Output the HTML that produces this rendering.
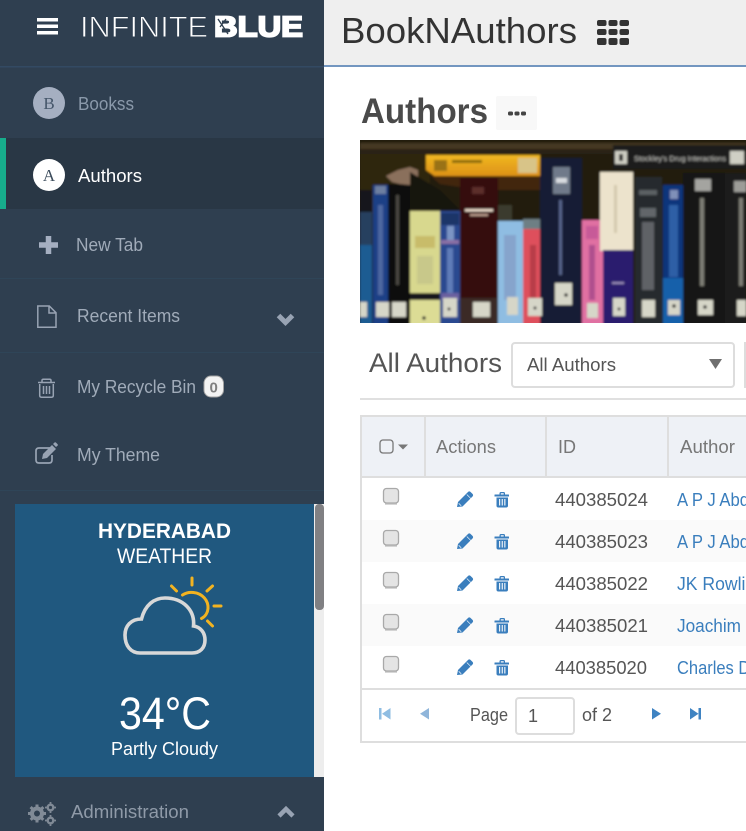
<!DOCTYPE html>
<html lang="en"><head><meta charset="utf-8"><title>BookNAuthors</title>
<style>
html,body{margin:0;padding:0;width:746px;height:831px;overflow:hidden;background:#fff}
svg{display:block}
text{font-family:"Liberation Sans",sans-serif}
</style></head><body>
<svg xmlns="http://www.w3.org/2000/svg" xmlns:xlink="http://www.w3.org/1999/xlink" width="746" height="831" viewBox="0 0 746 831">
<defs>
<filter id="bl" x="-5%" y="-5%" width="110%" height="110%"><feGaussianBlur stdDeviation="1.100"/></filter>
<linearGradient id="yl" x1="0" y1="0" x2="0" y2="1"><stop offset="0" stop-color="#f0b822"/><stop offset="1" stop-color="#d98a14"/></linearGradient>
<clipPath id="img"><rect x="360" y="140" width="386" height="183"/></clipPath>
<g id="pen"><path d="M457 507l1-5 10-10c.8-.8 1.800-.8 2.600 0l1.900 1.900c.8.8.8 1.800 0 2.600l-10 10z" fill="#3a7ebd"/><path d="M466.800 494.500l4.200 4.200" stroke="#fff" stroke-width=".6"/><path d="M458.700 503.300l2.500 2.500" stroke="#cfe0ef" stroke-width="1"/></g>
<g id="tr"><path d="M499.500 494.500v-1.200c0-.8.600-1.300 1.300-1.300h2.900c.8 0 1.300.5 1.300 1.300v1.200h3.500c.3 0 .5.200.5.500v1.500h-14.500V495c0-.3.200-.5.500-.5zm1.300 0h2.900v-1.200h-2.900z" fill="#3a7ebd" fill-rule="evenodd"/><path d="M496.500 497.500h11.500v8.300c0 1-.7 1.700-1.700 1.700h-8.100c-1 0-1.700-.7-1.700-1.700zm2.600 1.500v6.500h1.100V499zm2.600 0v6.500h1.100V499zm2.600 0v6.500h1.100V499z" fill="#3a7ebd" fill-rule="evenodd"/></g>
<g id="cb"><rect x="383.500" y="488.500" width="15" height="14.500" rx="3" fill="#e4e4e4" stroke="#a9a9a9" stroke-width="1.300"/><path d="M385 504h12" stroke="#bbb" stroke-width="1.200"/></g>
</defs>

<!-- main -->
<rect x="324" width="422" height="65" fill="#efefef"/>
<rect x="324" y="65" width="422" height="2" fill="#7396c0"/>
<text x="341" y="43" font-size="36" fill="#333" textLength="236" lengthAdjust="spacingAndGlyphs">BookNAuthors</text>
<g fill="#333">
<rect x="597" y="20" width="9.500" height="6" rx="2"/><rect x="608.500" y="20" width="9" height="6" rx="2"/><rect x="619.500" y="20" width="9.500" height="6" rx="2"/>
<rect x="597" y="29" width="9.500" height="6" rx="2"/><rect x="608.500" y="29" width="9" height="6" rx="2"/><rect x="619.500" y="29" width="9.500" height="6" rx="2"/>
<rect x="597" y="38" width="9.500" height="7" rx="2"/><rect x="608.500" y="38" width="9" height="7" rx="2"/><rect x="619.500" y="38" width="9.500" height="7" rx="2"/>
</g>
<text x="361" y="123" font-size="35" font-weight="700" fill="#4a4a4a" textLength="127" lengthAdjust="spacingAndGlyphs">Authors</text>
<rect x="496" y="96" width="41" height="34" rx="2" fill="#f8f8f8"/>
<g fill="#444"><rect x="508" y="111.500" width="5" height="4" rx="1.500"/><rect x="514.500" y="111.500" width="5" height="4" rx="1.500"/><rect x="521" y="111.500" width="5" height="4" rx="1.500"/></g>

<!-- books -->
<g clip-path="url(#img)"><g filter="url(#bl)">
<rect x="355" y="135" width="395" height="195" fill="#241d0c"/>
<rect x="360" y="143" width="386" height="6" fill="#443820"/>
<rect x="360" y="149" width="386" height="5" fill="#2b2412"/>
<rect x="360" y="154" width="70" height="60" fill="#2e2610"/>
<path d="M426 155H540V177H490L470 180H440L426 170Z" fill="url(#yl)"/>
<path d="M431 176H540V190H480L440 184Z" fill="#43260a"/>
<rect x="518" y="158" width="19" height="15" fill="#d8c488"/>
<rect x="434" y="160" width="13" height="11" fill="#9a7218"/>
<rect x="452" y="160" width="30" height="3" fill="#8a6a10"/>
<rect x="613" y="145" width="133" height="24" fill="#1e1e1d"/>
<rect x="615" y="151" width="12" height="13" fill="#cfcfc4"/>
<rect x="619" y="154" width="4" height="7" fill="#333"/>
<text x="634" y="161" font-size="7" fill="#bdbdb8" textLength="92" lengthAdjust="spacingAndGlyphs">Stockley's Drug Interactions</text>
<rect x="730" y="151" width="14" height="13" fill="#cfcfc4"/>
<rect x="360" y="190" width="12" height="140" fill="#15181f"/>
<rect x="360" y="212" width="12" height="50" fill="#27405e"/>
<rect x="360" y="245" width="12" height="85" fill="#1c5c92"/>
<rect x="373" y="185" width="15" height="145" fill="#1c3f86"/>
<rect x="375" y="186" width="11" height="8" fill="#6d7fa0"/>
<rect x="378" y="205" width="5" height="90" fill="#4e68a0"/>
<rect x="388" y="184" width="22" height="146" fill="#0f0f0e"/>
<rect x="396" y="195" width="3" height="90" fill="#4c4a42"/>
<path d="M386 176l12-6 12-3 8 3v9l-8 6-10-1-8-2z" fill="#8a6f5c"/>
<path d="M410 172l30 18 20 20h-50z" fill="#191308"/>
<rect x="410" y="211" width="30" height="82" fill="#d8d88e"/>
<rect x="415" y="236" width="20" height="12" fill="#c8bc6a"/>
<rect x="417" y="256" width="16" height="28" fill="#c8c88a"/>
<rect x="410" y="293" width="30" height="7" fill="#15131f"/>
<rect x="410" y="300" width="30" height="30" fill="#dcdc95"/>
<rect x="440" y="211" width="20" height="119" fill="#2a4a90"/>
<rect x="441" y="213" width="18" height="12" fill="#1c3468"/>
<rect x="447" y="226" width="7" height="15" fill="#7c94c4"/>
<rect x="441" y="240" width="18" height="4" fill="#8a70a4"/>
<rect x="447" y="248" width="6" height="45" fill="#5f7cb8"/>
<rect x="441" y="293" width="18" height="7" fill="#6a60a0"/>
<rect x="460" y="178" width="38" height="152" fill="#34080c"/>
<rect x="465" y="209" width="28" height="2.500" fill="#e8d8c8"/>
<rect x="470" y="214" width="18" height="2" fill="#c0a090"/>
<rect x="472" y="187" width="12" height="7" fill="#5c2e2c"/>
<rect x="460" y="298" width="38" height="32" fill="#3a2a28"/>
<rect x="498" y="221" width="25" height="109" fill="#8fbde2"/>
<rect x="504" y="235" width="12" height="65" fill="#86a4cc"/>
<rect x="498" y="205" width="14" height="16" fill="#3a3a2e"/>
<rect x="523" y="219" width="19" height="10" fill="#6e7f84"/>
<rect x="523" y="229" width="19" height="101" fill="#de505c"/>
<rect x="530" y="245" width="6" height="55" fill="#b83e4a"/>
<rect x="540" y="158" width="42" height="172" fill="#131a36"/>
<rect x="553" y="167" width="17" height="27" fill="#6f7a8a"/>
<rect x="556" y="178" width="11" height="5" fill="#d8dce0"/>
<rect x="559" y="200" width="3" height="75" fill="#56648a"/>
<rect x="582" y="220" width="21" height="110" fill="#e06fa2"/>
<rect x="586" y="226" width="12" height="13" fill="#c75a98"/>
<rect x="589" y="245" width="6" height="55" fill="#b0508e"/>
<rect x="600" y="172" width="33" height="79" fill="#ece3cc"/>
<rect x="614" y="185" width="3" height="48" fill="#d4c9ae"/>
<rect x="603" y="250" width="30" height="80" fill="#2a1a6e"/>
<rect x="612" y="282" width="12" height="2" fill="#9a8cb8"/>
<rect x="635" y="177" width="27" height="153" fill="#26292e"/>
<rect x="639" y="190" width="18" height="5" fill="#5c6064"/>
<rect x="640" y="208" width="16" height="9" fill="#62666a"/>
<rect x="642" y="222" width="12" height="68" fill="#5e6266"/>
<rect x="663" y="185" width="20" height="145" fill="#10347c"/>
<rect x="670" y="190" width="8" height="9" fill="#8090b8"/>
<rect x="669" y="205" width="9" height="72" fill="#2f5ea6"/>
<rect x="663" y="278" width="20" height="52" fill="#1460aa"/>
<rect x="683" y="173" width="42" height="157" fill="#151515"/>
<rect x="695" y="179" width="16" height="12" fill="#a4a4a0"/>
<rect x="700" y="198" width="4" height="88" fill="#7e7e74"/>
<rect x="725" y="173" width="21" height="157" fill="#1c1c1b"/>
<rect x="734" y="181" width="12" height="11" fill="#9c9c98"/>
<rect x="739" y="198" width="4" height="88" fill="#7e7e74"/>
<g fill="#d6d6c8">
<rect x="360" y="302" width="7" height="15"/><rect x="376" y="302" width="13" height="15"/><rect x="392" y="302" width="14" height="15"/><rect x="443" y="298" width="14" height="19"/><rect x="473" y="302" width="17" height="15"/><rect x="507" y="297" width="11" height="18"/><rect x="528" y="298" width="14" height="18"/><rect x="555" y="283" width="17" height="22"/><rect x="587" y="303" width="11" height="15"/><rect x="613" y="298" width="12" height="18"/><rect x="642" y="300" width="13" height="17"/><rect x="668" y="300" width="12" height="15"/><rect x="698" y="300" width="15" height="15"/><rect x="737" y="300" width="9" height="16"/>
</g>
<g fill="#2a2a2a"><circle cx="424" cy="318" r="1.800"/><circle cx="566" cy="295" r="1.800"/><circle cx="705" cy="307" r="1.800"/><circle cx="674" cy="306" r="1.800"/><circle cx="449" cy="309" r="1.500"/><circle cx="535" cy="308" r="1.500"/><circle cx="619" cy="309" r="1.500"/></g>
</g></g>

<!-- list header -->
<text x="369" y="372" font-size="27" fill="#555" textLength="133" lengthAdjust="spacingAndGlyphs">All Authors</text>
<rect x="512" y="343" width="222" height="44" rx="3" fill="#fff" stroke="#ddd" stroke-width="2"/>
<text x="527" y="371" font-size="18" fill="#555" textLength="89" lengthAdjust="spacingAndGlyphs">All Authors</text>
<path d="M709 359h13l-6.500 10z" fill="#6f6f6f"/>
<rect x="745" y="343" width="3" height="44" fill="#fff" stroke="#ddd" stroke-width="2"/>
<rect x="360" y="398" width="386" height="2" fill="#e0e0e0"/>

<!-- table -->
<rect x="362" y="416" width="384" height="61" fill="#eef1f6"/>
<rect x="360" y="415" width="386" height="2" fill="#dedede"/>
<rect x="360" y="415" width="2" height="328" fill="#dedede"/>
<rect x="424" y="416" width="2" height="61" fill="#dedede"/>
<rect x="545" y="416" width="2" height="61" fill="#dedede"/>
<rect x="667" y="416" width="2" height="61" fill="#dedede"/>
<rect x="362" y="476" width="384" height="2" fill="#dedede"/>
<rect x="362" y="520" width="384" height="42" fill="#fafafa"/>
<rect x="362" y="604" width="384" height="42" fill="#fafafa"/>
<rect x="362" y="688" width="384" height="2" fill="#dedede"/>
<rect x="360" y="741" width="386" height="2" fill="#dedede"/>

<rect x="380" y="440" width="13" height="13" rx="3" fill="none" stroke="#777" stroke-width="1.300"/>
<path d="M398 444.500h10l-5 5z" fill="#777"/>
<g font-size="18" fill="#777">
<text x="436" y="453" textLength="60" lengthAdjust="spacingAndGlyphs">Actions</text>
<text x="558" y="453" textLength="18" lengthAdjust="spacingAndGlyphs">ID</text>
<text x="680" y="453" textLength="55" lengthAdjust="spacingAndGlyphs">Author</text>
</g>

<use xlink:href="#cb" href="#cb"/><use xlink:href="#cb" href="#cb" y="42"/><use xlink:href="#cb" href="#cb" y="84"/><use xlink:href="#cb" href="#cb" y="126"/><use xlink:href="#cb" href="#cb" y="168"/>
<use xlink:href="#pen" href="#pen"/><use xlink:href="#pen" href="#pen" y="42"/><use xlink:href="#pen" href="#pen" y="84"/><use xlink:href="#pen" href="#pen" y="126"/><use xlink:href="#pen" href="#pen" y="168"/>
<use xlink:href="#tr" href="#tr"/><use xlink:href="#tr" href="#tr" y="42"/><use xlink:href="#tr" href="#tr" y="84"/><use xlink:href="#tr" href="#tr" y="126"/><use xlink:href="#tr" href="#tr" y="168"/>

<g font-size="18" fill="#555">
<text x="555" y="506" textLength="93" lengthAdjust="spacingAndGlyphs">440385024</text>
<text x="555" y="548" textLength="93" lengthAdjust="spacingAndGlyphs">440385023</text>
<text x="555" y="590" textLength="93" lengthAdjust="spacingAndGlyphs">440385022</text>
<text x="555" y="632" textLength="93" lengthAdjust="spacingAndGlyphs">440385021</text>
<text x="555" y="674" textLength="92" lengthAdjust="spacingAndGlyphs">440385020</text>
</g>
<g font-size="18" fill="#3a7ebd">
<text x="677" y="506" textLength="137" lengthAdjust="spacingAndGlyphs">A P J Abdul Kalam</text>
<text x="677" y="548" textLength="137" lengthAdjust="spacingAndGlyphs">A P J Abdul Kalam</text>
<text x="677" y="590" textLength="88" lengthAdjust="spacingAndGlyphs">JK Rowling</text>
<text x="677" y="632" textLength="64" lengthAdjust="spacingAndGlyphs">Joachim</text>
<text x="677" y="674" textLength="120" lengthAdjust="spacingAndGlyphs">Charles Dickens</text>
</g>

<!-- pager -->
<g fill="#8fbde2"><rect x="379" y="708" width="2.500" height="11.500"/><path d="M390.500 708v11.500l-8.500-5.750z"/><path d="M429 708v11.500l-9-5.750z" fill="#8fb5da"/></g>
<g fill="#3f83c2"><path d="M652 708v11.500l9-5.750z"/><path d="M690 708v11.500l8.500-5.750z"/><rect x="698.500" y="708" width="2.500" height="11.500"/></g>
<text x="470" y="721" font-size="18" fill="#555" textLength="38" lengthAdjust="spacingAndGlyphs">Page</text>
<rect x="516" y="698" width="58" height="36" rx="3" fill="#fff" stroke="#ddd" stroke-width="2"/>
<text x="528" y="722" font-size="18" fill="#555">1</text>
<text x="582" y="721" font-size="18" fill="#555" textLength="30" lengthAdjust="spacingAndGlyphs">of 2</text>

<!-- sidebar -->
<rect width="324" height="831" fill="#2f3f50"/>
<rect y="66" width="324" height="1.500" fill="#334a63"/>
<rect y="278" width="324" height="1" fill="#2f4558"/>
<rect y="352" width="324" height="1" fill="#2f4558"/>
<rect y="490" width="324" height="1" fill="#2f4558"/>
<rect y="138" width="324" height="71" fill="#293745"/>
<rect y="138" width="6" height="71" fill="#17ad8c"/>

<g fill="#fff"><rect x="37" y="18" width="21" height="3.500"/><rect x="37" y="24.500" width="21" height="3.500"/><rect x="37" y="31" width="21" height="3.500"/></g>
<text x="80" y="37" font-size="30" fill="#fff" stroke="#2f3f50" stroke-width=".9" textLength="128" lengthAdjust="spacingAndGlyphs">INFINITE</text>
<text x="214" y="36.500" font-size="29" font-weight="700" fill="#fff" stroke="#fff" stroke-width="1.800" textLength="89" lengthAdjust="spacingAndGlyphs">BLUE</text>
<path d="M218 19l10 15M226 19l-6 8" stroke="#2f3f50" stroke-width="1.300" fill="none"/>

<circle cx="49" cy="103" r="16" fill="#a5afc1"/>
<text x="49" y="109" font-size="17" fill="#45566a" text-anchor="middle" style="font-family:'Liberation Serif',serif">B</text>
<text x="78" y="110" font-size="18" fill="#8a99aa" textLength="56" lengthAdjust="spacingAndGlyphs">Bookss</text>
<circle cx="49" cy="175" r="16" fill="#fff"/>
<text x="49" y="181" font-size="17" fill="#3c4c5c" text-anchor="middle" style="font-family:'Liberation Serif',serif">A</text>
<text x="78" y="182" font-size="18" fill="#fff" textLength="64" lengthAdjust="spacingAndGlyphs">Authors</text>

<path d="M39 245h19M48.500 236v18" stroke="#a5afc1" stroke-width="5.500"/>
<text x="76" y="251" font-size="18" fill="#a0abb9" textLength="67" lengthAdjust="spacingAndGlyphs">New Tab</text>

<path d="M37.800 306h11.500l6.700 6.700v14.500H37.800zM49 306v7h7" fill="none" stroke="#98a3b3" stroke-width="1.500"/>
<text x="77" y="322" font-size="18" fill="#a0abb9" textLength="103" lengthAdjust="spacingAndGlyphs">Recent Items</text>
<path d="M278.500 315.500l7 7 7-7" fill="none" stroke="#98a3b3" stroke-width="5"/>

<g fill="none" stroke="#98a3b3" stroke-width="1.500"><path d="M38 382.500h17M42 382.500v-2c0-.8.500-1.300 1.300-1.300h6.400c.8 0 1.300.5 1.300 1.300v2M39.700 384v11.500c0 1 .7 1.700 1.700 1.700h10.200c1 0 1.700-.7 1.700-1.700V384M43.500 386v8M46.500 386v8M49.500 386v8"/></g>
<text x="77" y="393" font-size="18" fill="#a0abb9" textLength="119" lengthAdjust="spacingAndGlyphs">My Recycle Bin</text>
<rect x="204" y="376" width="19.500" height="21" rx="7" fill="#f3f3f3" stroke="#a3a3a3" stroke-width="1"/>
<text x="213.700" y="392.500" font-size="15" font-weight="700" fill="#808080" text-anchor="middle">0</text>

<path d="M50 448h-11c-2 0-3 1-3 3v9c0 2 1 3 3 3h10c2 0 3-1 3-3v-5" fill="none" stroke="#98a3b3" stroke-width="1.700"/>
<path d="M42 459l1-5 9-9 4 4-9 9zM53 444l1.500-1.500c.5-.4 1-.4 1.400 0l1.700 1.700c.4.4.4 1 0 1.400L56 447z" fill="#98a3b3"/>
<text x="77" y="461" font-size="18" fill="#a0abb9" textLength="83" lengthAdjust="spacingAndGlyphs">My Theme</text>

<!-- weather -->
<rect x="15" y="504" width="299" height="273" fill="#20587f"/>
<rect x="314" y="504" width="10" height="273" fill="#ededed"/>
<rect x="315" y="504" width="9" height="106" rx="4" fill="#808083"/>
<text x="164.500" y="538" font-size="21" font-weight="700" fill="#fff" text-anchor="middle" textLength="133" lengthAdjust="spacingAndGlyphs">HYDERABAD</text>
<text x="164.500" y="563" font-size="21" fill="#fff" text-anchor="middle" textLength="95" lengthAdjust="spacingAndGlyphs">WEATHER</text>
<g fill="none" stroke="#f2b321" stroke-width="3" stroke-linecap="round">
<path d="M182.500 595c3-2 7-3 11-2.500 9 1 15 8 14.500 16-.3 4-2.500 8-6.500 10"/>
<path d="M192 578v7M171.500 586l5 5M207 591l5.500-5M214 606h7M207.500 621l5 5"/>
</g>
<path d="M140 653H192C200 653 205 648 205 640C205 632 200 627 193.500 626C195 610 183 598 165 598C154 598 145 605 141.500 619C131 619 125 626 125 635C125 646 131 653 140 653Z" fill="#20587f" stroke="#d8d8d8" stroke-width="3.600"/>
<text x="165" y="729" font-size="45" fill="#fff" text-anchor="middle" textLength="92" lengthAdjust="spacingAndGlyphs">34°C</text>
<text x="164.500" y="755" font-size="18" fill="#fff" text-anchor="middle" textLength="107" lengthAdjust="spacingAndGlyphs">Partly Cloudy</text>

<!-- administration -->
<g fill="none" stroke="#808a96">
<circle cx="37" cy="813.500" r="5" stroke-width="4"/>
<path d="M37 804.500v18M28 813.500h18M30.600 807.100l12.800 12.800M43.400 807.100l-12.800 12.800" stroke-width="3" stroke-dasharray="3 12"/>
<circle cx="50.500" cy="807.500" r="2.800" stroke-width="2.400"/>
<circle cx="50.500" cy="820.500" r="2.800" stroke-width="2.400"/>
<path d="M50.500 802v11M45 807.500h11M50.500 815v11M45 820.500h11" stroke-width="1.800" stroke-dasharray="1.800 7.400"/>
</g>
<text x="71" y="818" font-size="18" fill="#8f9aa8" textLength="118" lengthAdjust="spacingAndGlyphs">Administration</text>
<path d="M279 816l7-7 7 7" fill="none" stroke="#98a3b3" stroke-width="4.500"/>
</svg>
</body></html>
